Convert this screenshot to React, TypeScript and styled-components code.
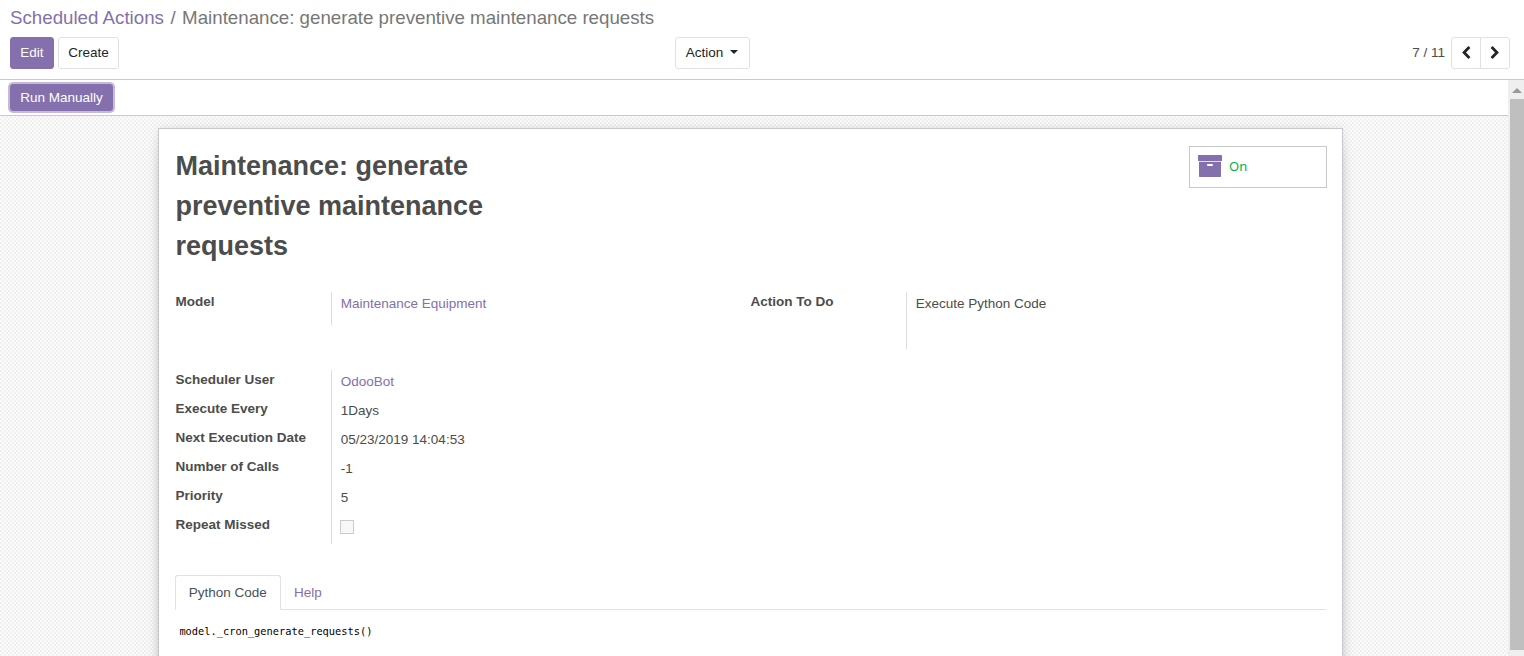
import React from 'react';
import styled, { createGlobalStyle, css } from 'styled-components';

const GlobalStyle = createGlobalStyle`
  *, *::before, *::after { box-sizing: border-box; }
  html, body { margin: 0; height: 100%; overflow: hidden; }
  body {
    background: #fff;
    color: #4c4c4c;
    font-family: "Liberation Sans", Arial, sans-serif;
    font-size: 13.5px;
    line-height: 20px;
  }
`;

const Screen = styled.div`
  display: flex;
  flex-direction: column;
  height: 656px;
  overflow: hidden;
`;

const ControlPanel = styled.header`
  display: flex;
  flex-direction: column;
  height: 80px;
  padding: 5px 14px 0 10px;
  border-bottom: 1px solid #cacaca;
`;

const Breadcrumb = styled.nav`
  display: flex;
  gap: 6.5px;
  height: 32px;
  line-height: 26px;
  font-size: 18.72px;
  white-space: nowrap;
  color: #777;
`;

const BreadcrumbLink = styled.a`
  color: #8470ac;
`;

const Toolbar = styled.div`
  display: grid;
  grid-template-columns: 665px 1fr auto;
  height: 32px;
`;

const ButtonGroup = styled.div`
  display: flex;
  gap: 4px;
`;

const Button = styled.button<{ $width: number; $primary?: boolean; $compact?: boolean }>`
  display: flex;
  align-items: center;
  justify-content: center;
  width: ${(p) => p.$width}px;
  height: ${(p) => (p.$compact ? 27 : 32)}px;
  padding: 0 0 1px;
  border: 1px solid #dee2e6;
  border-radius: 3px;
  background: #fff;
  color: #212529;
  font: inherit;
  white-space: nowrap;
  ${(p) =>
    p.$primary &&
    css`
      border-color: #8470ac;
      background: #8470ac;
      color: #fff;
    `}
  ${(p) =>
    p.$compact &&
    css`
      padding: 1px 0 0;
      box-shadow: 0 0 0 2px #c5bbd8;
    `}
`;

const Caret = styled.span`
  margin: 0 1px 2px 7px;
  border: 4px solid transparent;
  border-top-color: #212529;
  border-bottom: 0;
`;

const Pager = styled.div`
  display: flex;
  align-items: flex-start;
`;

const PagerCount = styled.span`
  padding: 6px 6px 0 0;
`;

const PagerButtons = styled.div`
  display: flex;
  width: 59px;
  height: 32px;
  border: 1px solid #dee2e6;
  border-radius: 3px;
`;

const PagerButton = styled.button`
  display: flex;
  flex: 1;
  align-items: center;
  justify-content: center;
  padding: 0;
  border: 0;
  background: none;
  color: #212529;
  & + & { border-left: 1px solid #dee2e6; }
`;

const Content = styled.div`
  display: flex;
  flex: 1;
  min-height: 0;
`;

const FormView = styled.main`
  display: flex;
  flex: 1;
  flex-direction: column;
  min-width: 0;
`;

const StatusBar = styled.div`
  flex: none;
  height: 36px;
  padding: 4px 10px;
  border-bottom: 1px solid #cacaca;
  background: #fff;
`;

const SheetBackground = styled.div`
  flex: 1;
  min-height: 0;
  overflow: hidden;
  padding: 12px 165px 0 158px;
  background: repeating-conic-gradient(#f0f0f0 0 25%, #fbfbfb 0 50%) 0 0 / 4px 4px;
`;

const Sheet = styled.section`
  height: 700px;
  padding: 17px 16px 0 16.4px;
  border: 1px solid #c8c8d3;
  background: #fff;
  box-shadow: 0 5px 20px -15px #000, 0 0 10px rgba(0, 0, 0, 0.08);
`;

const SheetHead = styled.div`
  display: flex;
  justify-content: space-between;
  align-items: flex-start;
  height: 146px;
  margin-right: -1px;
`;

const Title = styled.h1`
  width: 330px;
  margin: 0;
  font-size: 27px;
  font-weight: 700;
  line-height: 40px;
`;

const StatButton = styled.button`
  display: flex;
  align-items: center;
  gap: 7px;
  width: 138px;
  height: 42px;
  padding: 0 0 2px 8px;
  border: 1px solid #c8c8c8;
  background: #fff;
  color: #00b04a;
  font: 13px/20px "Noto Sans", "Open Sans", sans-serif;
`;

const Groups = styled.div<{ $height: number }>`
  display: grid;
  grid-template-columns: 575px 1fr;
  align-items: start;
  height: ${(p) => p.$height}px;
`;

const Group = styled.div`
  display: flex;
  flex-direction: column;
`;

const Row = styled.div<{ $height?: number }>`
  display: grid;
  grid-template-columns: 155.4px 1fr;
  height: ${(p) => p.$height ?? 29}px;
`;

const Label = styled.label`
  font-weight: 700;
`;

const Value = styled.div<{ $link?: boolean }>`
  padding: 2px 0 0 9px;
  border-left: 1px solid #ddd;
  color: ${(p) => (p.$link ? '#8470ac' : '#4c4c4c')};
`;

const Checkbox = styled.span`
  display: block;
  width: 14px;
  height: 14px;
  margin: 3px 0 0 -1px;
  border: 1px solid #ccc;
  background: #f7f7f7;
`;

const Tabs = styled.div`
  display: flex;
  height: 35px;
  border-bottom: 1px solid #dee2e6;
`;

const Tab = styled.div<{ $active?: boolean }>`
  height: 35px;
  padding: 7px 11.6px 0;
  border: 1px solid transparent;
  color: #8470ac;
  white-space: nowrap;
  ${(p) =>
    p.$active &&
    css`
      width: 106px;
      padding-left: 12.4px;
      border-color: #dee2e6;
      border-bottom-color: #fff;
      border-radius: 3px 3px 0 0;
      background: #fff;
      color: #495057;
    `}
`;

const Code = styled.pre`
  margin: 11px 0 0 4px;
  color: #000;
  font: 10.35px/20px "DejaVu Sans Mono", monospace;
`;

const Scrollbar = styled.div`
  display: flex;
  flex-direction: column;
  align-items: center;
  width: 16px;
  padding: 8px 0 0 2px;
  background: #efefef;
`;

const ScrollArrow = styled.span`
  margin-bottom: 6px;
  border: 5px solid transparent;
  border-top: 0;
  border-bottom-color: #999;
`;

const ScrollThumb = styled.div`
  width: 14px;
  height: 551px;
  background: #bfbfbf;
`;

const Chevron = ({ right }: { right?: boolean }) => (
  <svg width="14" height="14" viewBox="0 0 1792 1792" fill="currentColor">
    <path
      transform={right ? 'translate(1792 0) scale(-1 1)' : undefined}
      d="M1427 301l-531 531 531 531q19 19 19 45t-19 45l-166 166q-19 19-45 19t-45-19l-742-742q-19-19-19-45t19-45l742-742q19-19 45-19t45 19l166 166q19 19 19 45t-19 45z"
    />
  </svg>
);

const ArchiveIcon = () => (
  <svg width="24" height="22" viewBox="0 0 24 22" fill="#8470ac">
    <rect width="24" height="6" rx="0.6" />
    <path d="M1 6.7h22v14.5q0 .8-.8.8H1.8q-.8 0-.8-.8zM9.8 9q-.8 0-.8 1t.8 1h4.4q.8 0 .8-1t-.8-1z" fillRule="evenodd" />
  </svg>
);

export default function App() {
  return (
    <>
      <GlobalStyle />
      <Screen>
        <ControlPanel>
          <Breadcrumb>
            <BreadcrumbLink>Scheduled Actions</BreadcrumbLink>
            <span>/</span>
            <span>Maintenance: generate preventive maintenance requests</span>
          </Breadcrumb>
          <Toolbar>
            <ButtonGroup>
              <Button $width={44} $primary>Edit</Button>
              <Button $width={61}>Create</Button>
            </ButtonGroup>
            <Button $width={75}>
              Action
              <Caret />
            </Button>
            <Pager>
              <PagerCount>7 / 11</PagerCount>
              <PagerButtons>
                <PagerButton><Chevron /></PagerButton>
                <PagerButton><Chevron right /></PagerButton>
              </PagerButtons>
            </Pager>
          </Toolbar>
        </ControlPanel>
        <Content>
          <FormView>
            <StatusBar>
              <Button $width={103} $primary $compact>Run Manually</Button>
            </StatusBar>
            <SheetBackground>
              <Sheet>
                <SheetHead>
                  <Title>Maintenance: generate preventive maintenance requests</Title>
                  <StatButton>
                    <ArchiveIcon />
                    On
                  </StatButton>
                </SheetHead>
                <Groups $height={78}>
                  <Group>
                    <Row $height={33}>
                      <Label>Model</Label>
                      <Value $link>Maintenance Equipment</Value>
                    </Row>
                  </Group>
                  <Group>
                    <Row $height={57}>
                      <Label>Action To Do</Label>
                      <Value>Execute Python Code</Value>
                    </Row>
                  </Group>
                </Groups>
                <Groups $height={205}>
                  <Group>
                    <Row>
                      <Label>Scheduler User</Label>
                      <Value $link>OdooBot</Value>
                    </Row>
                    <Row>
                      <Label>Execute Every</Label>
                      <Value>1Days</Value>
                    </Row>
                    <Row>
                      <Label>Next Execution Date</Label>
                      <Value>05/23/2019 14:04:53</Value>
                    </Row>
                    <Row>
                      <Label>Number of Calls</Label>
                      <Value>-1</Value>
                    </Row>
                    <Row>
                      <Label>Priority</Label>
                      <Value>5</Value>
                    </Row>
                    <Row>
                      <Label>Repeat Missed</Label>
                      <Value><Checkbox /></Value>
                    </Row>
                  </Group>
                </Groups>
                <Tabs>
                  <Tab $active>Python Code</Tab>
                  <Tab>Help</Tab>
                </Tabs>
                <Code>model._cron_generate_requests()</Code>
              </Sheet>
            </SheetBackground>
          </FormView>
          <Scrollbar>
            <ScrollArrow />
            <ScrollThumb />
          </Scrollbar>
        </Content>
      </Screen>
    </>
  );
}
